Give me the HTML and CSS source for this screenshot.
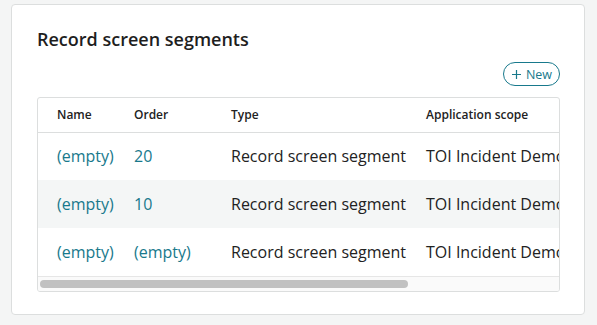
FILE: index.html
```html
<!DOCTYPE html>
<html lang="en">
<head>
    <meta charset="UTF-8">
    <title>Record screen segments</title>
    <link rel="stylesheet" href="styles.css">
</head>
<body>
<div class="card">
    <h2 class="card-title">Record screen segments</h2>
    <div class="toolbar">
        <button class="btn-new">
            <svg class="plus" width="9" height="9" viewBox="0 0 9 9"><path d="M4.5 0v9M0 4.5h9" stroke="currentColor" stroke-width="1.2" fill="none"/></svg>
            New
        </button>
    </div>
    <div class="table-wrap">
        <div class="table-scroll">
            <table class="list">
                <colgroup>
                    <col class="c-name">
                    <col class="c-order">
                    <col class="c-type">
                    <col class="c-scope">
                </colgroup>
                <thead>
                <tr>
                    <th>Name</th>
                    <th>Order</th>
                    <th>Type</th>
                    <th>Application scope</th>
                </tr>
                </thead>
                <tbody>
                <tr>
                    <td><a href="#">(empty)</a></td>
                    <td><a href="#">20</a></td>
                    <td>Record screen segment</td>
                    <td>TOI Incident Demo</td>
                </tr>
                <tr class="odd">
                    <td><a href="#">(empty)</a></td>
                    <td><a href="#">10</a></td>
                    <td>Record screen segment</td>
                    <td>TOI Incident Demo</td>
                </tr>
                <tr>
                    <td><a href="#">(empty)</a></td>
                    <td><a href="#">(empty)</a></td>
                    <td>Record screen segment</td>
                    <td>TOI Incident Demo</td>
                </tr>
                </tbody>
            </table>
        </div>
        <div class="scrollbar">
            <div class="thumb"></div>
        </div>
    </div>
</div>
</body>
</html>
```

FILE: styles.css
```css
* {
    margin: 0;
    padding: 0;
    box-sizing: border-box;
}
body {
    background-color: #f4f5f5;
    padding: 4px 12px 0 11px;
    font-family: "Open Sans", "Noto Sans", sans-serif;
    color: #222;
}
.card {
    width: 574px;
    height: 311px;
    background-color: #fff;
    border: 1px solid #dcdede;
    border-radius: 4px;
    padding: 22px 24px 0 25px;
}
.card-title {
    font-size: 18px;
    line-height: 24px;
    font-weight: 600;
    color: #1e1e1e;
}
.toolbar {
    display: flex;
    justify-content: flex-end;
    margin-top: 11px;
    margin-bottom: 11px;
}
.btn-new {
    display: flex;
    align-items: center;
    justify-content: center;
    gap: 5px;
    width: 57px;
    height: 24px;
    padding: 0 2px 0 3px;
    border: 1px solid #18798c;
    border-radius: 12px;
    background-color: #fff;
    color: #18798c;
    font-family: inherit;
    font-size: 12.5px;
}
.table-wrap {
    border: 1px solid #dcdede;
    border-radius: 3px;
    overflow: hidden;
}
.table-scroll {
    overflow: hidden;
}
.list {
    width: 740px;
    table-layout: fixed;
    border-collapse: collapse;
}
.c-name { width: 77px; }
.c-order { width: 97px; }
.c-type { width: 195px; }
.list th {
    height: 34px;
    text-align: left;
    font-size: 12px;
    font-weight: 600;
    color: #222;
    padding-left: 19px;
    border-bottom: 1px solid #dcdede;
    white-space: nowrap;
}
.list td {
    height: 48px;
    font-size: 16px;
    padding-left: 19px;
    white-space: nowrap;
}
.list tr.odd td {
    background-color: #f4f6f6;
}
.list a {
    color: #18798c;
    text-decoration: none;
}
.scrollbar {
    height: 15px;
    background-color: #fafafa;
    border-top: 1px solid #e6e6e6;
    padding: 3px 2px;
}
.thumb {
    width: 368px;
    height: 8px;
    background-color: #c1c1c1;
    border-radius: 4px;
}
```
